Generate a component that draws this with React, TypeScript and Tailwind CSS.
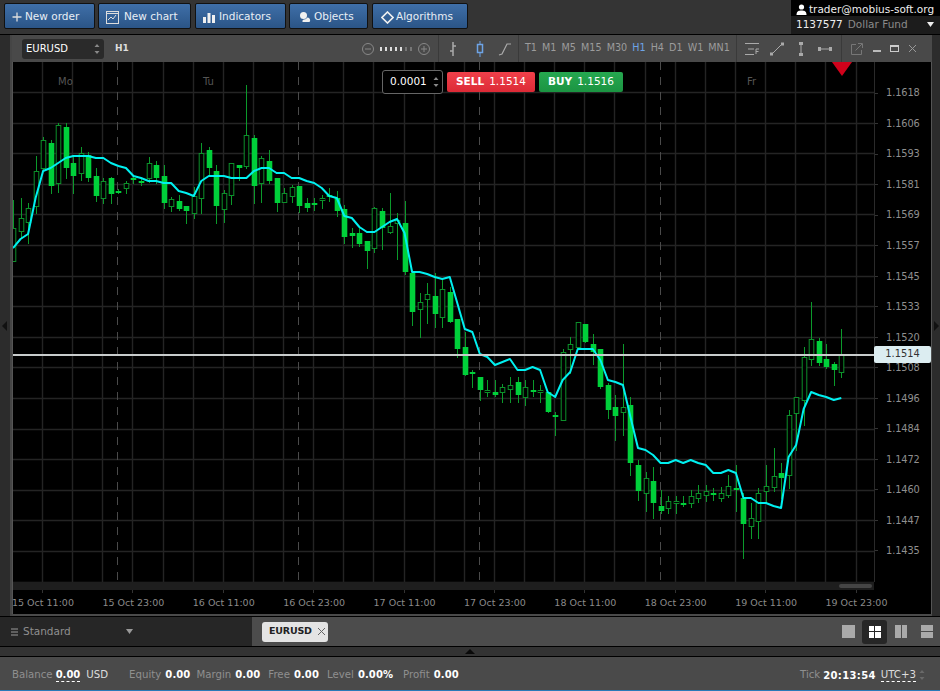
import React from "react";

// [high, low, bodyTop, bodyBottom, filled]
const C: [number, number, number, number, number][] = [
  [200,261,228,261,0],[198,237,218,231,0],[203,243,208,222,0],[156,213,171,206,0],[137,170,140,168,0],[140,193,143,186,1],[123,192,125,183,0],[123,178,127,168,1],[155,193,163,176,1],[147,180,153,173,0],
  [152,181,155,178,1],[168,201,176,196,1],[178,203,181,198,0],[177,203,178,194,1],[189,193,191,192,1],[181,193,183,188,0],[176,183,178,180,1],[178,185,181,182,1],[157,182,163,178,0],[161,183,165,178,1],
  [165,208,176,203,1],[197,211,199,206,0],[195,210,201,209,1],[206,223,206,211,1],[187,218,196,213,0],[143,213,153,198,0],[147,175,150,168,1],[165,223,171,206,1],[190,222,193,209,0],[163,204,163,195,0],
  [165,180,165,168,1],[85,168,135,166,0],[135,203,138,186,1],[156,202,158,183,0],[150,183,161,181,1],[178,211,178,203,1],[188,202,193,202,0],[185,202,187,196,0],[186,212,186,206,1],[198,211,203,208,1],
  [198,210,203,205,1],[195,208,198,200,0],[188,201,195,197,1],[191,216,198,211,1],[205,243,209,237,1],[228,247,233,236,1],[227,246,233,244,1],[241,268,241,251,1],[207,252,208,248,0],[208,249,211,228,1],
  [193,233,226,232,0],[213,259,220,223,0],[201,274,223,272,1],[270,325,273,312,1],[293,337,302,309,0],[283,323,294,299,0],[273,327,296,314,1],[280,327,289,317,0],[287,322,292,322,1],[319,357,319,349,1],
  [332,375,347,375,1],[370,387,372,374,1],[377,400,377,390,1],[380,396,390,392,0],[380,396,392,395,1],[384,402,387,392,0],[377,402,385,389,0],[377,402,382,395,1],[380,405,387,397,0],[380,396,390,391,1],
  [385,402,390,392,0],[392,412,392,412,1],[412,435,415,417,1],[349,420,352,420,0],[337,373,344,349,0],[322,348,322,347,0],[324,342,324,342,1],[334,364,344,352,1],[349,388,349,387,1],[383,418,385,410,1],
  [395,440,407,416,1],[344,435,407,412,0],[397,475,405,463,1],[460,500,465,491,1],[472,511,478,493,0],[467,518,481,503,1],[490,513,506,511,1],[496,513,501,508,0],[496,513,501,503,0],[496,506,503,505,1],
  [490,507,496,503,0],[485,502,493,498,0],[485,501,491,495,0],[488,500,493,495,1],[487,501,493,498,0],[475,497,486,495,0],[465,511,488,490,1],[493,558,498,524,1],[503,538,518,526,0],[488,538,493,521,0],
  [465,502,486,491,0],[448,491,476,487,0],[463,498,473,478,1],[410,488,415,475,0],[397,450,397,413,0],[347,425,357,400,0],[302,365,339,359,0],[338,365,341,363,1],[344,368,359,367,1],[362,385,364,370,1],
  [329,377,355,372,0],
];

const MA = [248,239,234,198,171,168,163,158,156,156,156,158,158,163,166,168,176,178,181,181,183,183,191,193,196,181,176,176,176,178,178,178,171,168,168,173,173,178,178,181,183,188,196,198,216,218,227,232,232,227,222,219,233,272,272,274,277,279,277,303,329,332,354,357,365,362,359,370,370,367,370,392,397,380,372,349,349,349,360,380,382,385,417,448,450,455,463,463,460,463,460,463,465,473,473,470,473,498,498,503,503,506,508,457,445,409,392,395,397,400,398];

const px = (i: number) => Math.round(13 + 7.53 * i) + 0.5;

function Chart() {
  const v = Array.from({ length: 28 }, (_, k) => Math.round(42 + 30.13 * k) + 0.5);
  const h = Array.from({ length: 17 }, (_, k) => Math.round(92 + 30.6 * k) + 0.5);
  return (
    <svg width={861} height={520} viewBox="13 62 861 520" className="block shrink-0 bg-black">
      {v.map((x) => <line key={x} x1={x} x2={x} y1={62} y2={582} stroke="#242424" strokeWidth={1.4} />)}
      {h.map((y) => <line key={y} x1={13} x2={874} y1={y} y2={y} stroke="#242424" strokeWidth={1.4} />)}
      {[117.5, 298.5, 479.5, 660.5].map((x) => <line key={x} x1={x} x2={x} y1={62} y2={582} stroke="#4a4a4a" strokeDasharray="8 7" />)}
      {C.map(([hi, lo, t, b, f], i) => {
        const x = px(i);
        return (
          <g key={i}>
            <line x1={x} x2={x} y1={hi} y2={lo + 1} stroke="#0b9a2b" />
            {f ? (
              <rect x={x - 2.8} y={t} width={5.6} height={Math.max(b - t, 2)} fill="#00d03a" />
            ) : (
              <rect x={x - 2.3} y={t + 0.5} width={4.6} height={Math.max(b - t, 2)} fill="#000" stroke="#0c8f2a" />
            )}
          </g>
        );
      })}
      <polyline points={MA.map((y, i) => `${13 + 7.53 * i},${y}`).join(" ")} fill="none" stroke="#00f0f0" strokeWidth={2} strokeLinejoin="round" />
      <rect x={13} y={354} width={861} height={2} fill="#c8cccc" />
      <polygon points="832,62 852,62 842,76" fill="#d0021b" />
      <text x={58} y={85} fill="#555" fontSize={10}>Mo</text>
      <text x={203} y={85} fill="#555" fontSize={10}>Tu</text>
      <text x={747} y={85} fill="#555" fontSize={10}>Fr</text>
    </svg>
  );
}

const Spinner = () => (
  <svg width="6" height="12" viewBox="0 0 6 12" className="shrink-0">
    <path d="M3 1 L5.5 4 H0.5 Z M3 11 L5.5 8 H0.5 Z" fill="#888" />
  </svg>
);

function TopButton({ label, icon, cls }: { label: string; icon: React.ReactNode; cls: string }) {
  return (
    <button className={`${cls} h-[26px] shrink-0 flex items-center pt-[2px] rounded-[2px] border border-[#111] bg-gradient-to-b from-[#3f6fa8] to-[#2b5587] text-[#e8eef5] text-[10.5px] whitespace-nowrap`}>
      {icon}
      <span>{label}</span>
    </button>
  );
}

const sv = { fill: "none", stroke: "#ddd" };

const Tf = ({ t, on }: { t: string; on?: boolean }) => (
  <span className={on ? "text-[#6ea4e6]" : "text-[#9c9c9c]"}>{t}</span>
);

function Header() {
  return (
    <div className="h-[27px] flex items-center bg-[#494949] shrink-0 text-[9.5px]">
      <div className="ml-[10px] w-[82px] h-[20px] bg-[#2a2a2a] rounded-[3px] flex items-center justify-between pl-[4px] pr-[4px] text-white text-[10px]">
        <span>EURUSD</span>
        <Spinner />
      </div>
      <span className="ml-[11px] w-[246px] text-[#ddd] font-bold text-[9px]">H1</span>
      <svg width="14" height="14" viewBox="0 0 14 14" className="shrink-0"><circle cx="7" cy="7" r="5.5" fill="none" stroke="#888" /><path d="M4 7H10" stroke="#888" /></svg>
      <svg width="36" height="6" viewBox="0 0 36 6" className="shrink-0 ml-[2px]">
        {[3, 8, 13, 18, 23, 28, 33].map((x, i) => <rect key={x} x={x} y={1} width={2} height={4} fill={i < 5 ? "#ddd" : "#777"} />)}
      </svg>
      <svg width="14" height="14" viewBox="0 0 14 14" className="shrink-0 ml-[4px]"><circle cx="7" cy="7" r="5.5" fill="none" stroke="#888" /><path d="M4 7H10M7 4V10" stroke="#888" /></svg>
      <div className="ml-[7px] h-full w-px bg-[#3a3a3a]" />
      <svg width="10" height="16" viewBox="0 0 10 16" className="ml-[9px] shrink-0"><path d="M5 1V15M2 10H5M5 5H8" stroke="#aaa" strokeWidth="1.5" fill="none" /></svg>
      <svg width="10" height="16" viewBox="0 0 10 16" className="ml-[17px] shrink-0"><path d="M5 0V16" stroke="#6ea4e6" /><rect x="2.5" y="3.5" width="5" height="8" fill="#494949" stroke="#6ea4e6" strokeWidth="1.5" /></svg>
      <svg width="14" height="14" viewBox="0 0 14 14" className="ml-[13px] shrink-0"><path d="M1 13L4 12L9 2H13" stroke="#aaa" strokeWidth="1.2" fill="none" /></svg>
      <div className="ml-[6px] h-full w-px bg-[#3a3a3a]" />
      <div className="ml-[6px] w-[205px] shrink-0 flex justify-between text-[9.6px]">
        <Tf t="T1" /><Tf t="M1" /><Tf t="M5" /><Tf t="M15" /><Tf t="M30" /><Tf t="H1" on /><Tf t="H4" /><Tf t="D1" /><Tf t="W1" /><Tf t="MN1" />
      </div>
      <div className="ml-[6px] h-full w-px bg-[#3a3a3a]" />
      <svg width="14" height="12" viewBox="0 0 14 12" className="ml-[8px] shrink-0"><path d="M0 .5H14M3 6H9M0 11.5H9M11 11V6H14M11 8.5H13.5" stroke="#aaa" fill="none" /></svg>
      <svg width="14" height="14" viewBox="0 0 14 14" className="ml-[11px] shrink-0"><path d="M2 12L12 2" stroke="#aaa" /><rect x="0" y="10.5" width="3" height="3" fill="#aaa" /><rect x="11" y=".5" width="3" height="3" fill="#aaa" /></svg>
      <svg width="6" height="14" viewBox="0 0 6 14" className="ml-[14px] shrink-0"><path d="M3 2V12" stroke="#aaa" /><rect x="1" y="0" width="4" height="3" fill="#aaa" /><rect x="1" y="11" width="4" height="3" fill="#aaa" /></svg>
      <svg width="14" height="6" viewBox="0 0 14 6" className="ml-[14px] shrink-0"><path d="M2 3H12" stroke="#aaa" /><rect x="0" y="1" width="3" height="4" fill="#aaa" /><rect x="11" y="1" width="3" height="4" fill="#aaa" /></svg>
      <div className="ml-[9px] h-full w-px bg-[#3a3a3a]" />
      <svg width="12" height="12" viewBox="0 0 12 12" className="ml-[9px] shrink-0"><path d="M5 1.5H.5V11.5H10.5V7M4.5 7.5L11 1M7 .5H11.5V5" stroke="#777" fill="none" /></svg>
      <svg width="9" height="9" viewBox="0 0 9 9" className="ml-[10px] shrink-0"><rect x="0" y="6" width="8" height="2" fill="#bbb" /></svg>
      <svg width="9" height="9" viewBox="0 0 9 9" className="ml-[8px] shrink-0"><rect x=".5" y="1.5" width="8" height="6" fill="none" stroke="#ccc" /><rect x="0" y="1" width="9" height="2" fill="#ccc" /></svg>
      <svg width="9" height="9" viewBox="0 0 9 9" className="ml-[9px] shrink-0"><path d="M1 1L8 8M8 1L1 8" stroke="#999" /></svg>
    </div>
  );
}

const prices = ["1.1618","1.1606","1.1593","1.1581","1.1569","1.1557","1.1545","1.1533","1.1520","1.1508","1.1496","1.1484","1.1472","1.1460","1.1447","1.1435"];
const times = ["15 Oct 11:00","15 Oct 23:00","16 Oct 11:00","16 Oct 23:00","17 Oct 11:00","17 Oct 23:00","18 Oct 11:00","18 Oct 23:00","19 Oct 11:00","19 Oct 23:00"];

const St = ({ l, v, cls }: { l: string; v: string; cls: string }) => (
  <span className={`${cls} flex items-baseline gap-[4px]`}>
    <span className="text-[#8f8f8f]">{l}</span>
    <span className="text-white font-bold text-[10px] tracking-[0.1px]">{v}</span>
  </span>
);

export default function App() {
  return (
    <div className="w-[940px] h-[691px] overflow-hidden flex flex-col bg-[#333] font-['DejaVu_Sans',sans-serif]">
      {/* top bar */}
      <div className="h-[35px] shrink-0 flex bg-[#343434] border-b border-black">
        <div className="flex pl-[4px] pt-[3px]">
          <TopButton cls="w-[91px] pl-[7px] gap-[3px]" label="New order" icon={<svg width="10" height="10" viewBox="0 0 10 10"><path d="M5 0.5V9.5M0.5 5H9.5" stroke="#ddd" strokeWidth="1.3" /></svg>} />
          <TopButton cls="ml-[3px] w-[93px] pl-[7px] gap-[5px]" label="New chart" icon={<svg width="13" height="13" viewBox="0 0 13 13"><rect x=".5" y=".5" width="12" height="12" {...sv} /><path d="M2 9L5 6L7 8L10 4" {...sv} /><path d="M1 2.5H12" {...sv} /></svg>} />
          <TopButton cls="ml-[4px] w-[91px] pl-[7px] gap-[4px]" label="Indicators" icon={<svg width="12" height="11" viewBox="0 0 12 11"><path d="M0 5H3V11H0ZM4.5 1H7.5V11H4.5ZM9 3H12V11H9Z" fill="#f0f0f0" /></svg>} />
          <TopButton cls="ml-[3px] w-[79px] pl-[9px] gap-[3px]" label="Objects" icon={<svg width="12" height="12" viewBox="0 0 12 12"><circle cx="4.5" cy="4.5" r="3.5" fill="#f0f0f0" /><path d="M5 8.5C8 8.5 8 5 10 7C12 9 11 11 10 11H4C3 11 3 9 5 8.5Z" fill="#f0f0f0" /></svg>} />
          <TopButton cls="ml-[4px] w-[96px] pl-[8px] gap-[2px]" label="Algorithms" icon={<svg width="13" height="13" viewBox="0 0 13 13"><path d="M6.5 1L12 6.5L6.5 12L1 6.5Z" fill="none" stroke="#f0f0f0" strokeWidth="1.6" /></svg>} />
        </div>
        <div className="ml-auto w-[149px] h-full bg-[#1c1c1c] flex flex-col">
          <div className="h-[16px] pt-[3px] bg-black flex items-center gap-[2px] pl-[5px] text-[#eee] text-[10.5px] whitespace-nowrap">
            <svg width="11" height="11" viewBox="0 0 11 11" className="shrink-0"><circle cx="5.5" cy="3" r="2.6" fill="#fff" /><path d="M0.5 11C0.5 7 3 6.5 5.5 6.5S10.5 7 10.5 11Z" fill="#fff" /></svg>
            <span>trader@mobius-soft.org</span>
          </div>
          <div className="flex-1 flex items-center pl-[5px] pr-[6px] text-[10.5px] gap-[5px] whitespace-nowrap">
            <span className="text-[#eee]">1137577</span>
            <span className="text-[#8a8a8a]">Dollar Fund</span>
            <svg width="7" height="6" viewBox="0 0 7 6" className="ml-auto"><path d="M0 0H7L3.5 5Z" fill="#eee" /></svg>
          </div>
        </div>
      </div>

      {/* chart region */}
      <div className="h-[581px] shrink-0 flex">
        <div className="w-[12px] shrink-0 flex items-center bg-[#2c2c2c] border-r-2 border-[#454545]">
          <svg width="5" height="10" viewBox="0 0 5 10" className="ml-[2px]"><path d="M5 0V10L0 5Z" fill="#111" /></svg>
        </div>
        <div className="relative w-[920px] shrink-0 flex flex-col bg-[#4a4a4a]">
          <Header />
          <div className="flex flex-col bg-black border-l border-[#555] border-r border-r-[#555]">
            <div className="flex h-[520px]">
              <Chart />
              <div className="flex-1 flex flex-col pt-[16px] border-l border-[#2a2a2a] text-[#8f8f8f] text-[9.8px] tracking-[-0.1px]">
                {prices.map((p) => (
                  <div key={p} className="h-[30.53px] shrink-0 flex items-center">
                    <span className="w-[3px] h-px bg-[#333]" />
                    <span className="ml-[8px] pt-[1px]">{p}</span>
                  </div>
                ))}
              </div>
            </div>
            <div className="h-[8px] flex">
              <div className="w-[861px] h-full flex items-center justify-end pr-[2px] bg-[#1e1e1e]">
                <div className="w-[33px] h-[4px] rounded-full bg-[#454545]" />
              </div>
            </div>
            <div className="h-[24px] flex ml-[-1px] overflow-hidden text-[#8a8a8a] text-[9.5px] whitespace-nowrap">
              {times.map((t) => (
                <div key={t} className="w-[90.4px] shrink-0 flex flex-col">
                  <span className="w-px h-[3px] ml-[30px] bg-[#333]" />
                  <span className="mt-[3px]">{t}</span>
                </div>
              ))}
            </div>
          </div>

          {/* overlays */}
          <div className="absolute left-[370px] top-[35px] flex items-center gap-[4px] whitespace-nowrap">
            <div className="w-[61px] h-[24px] flex items-center justify-between pl-[7px] pr-[3px] bg-black border border-[#666] rounded-[3px] text-white text-[10.5px]">
              <span>0.0001</span>
              <Spinner />
            </div>
            <div className="w-[88px] h-[20px] flex items-center justify-center gap-[5px] rounded-[2px] bg-gradient-to-b from-[#f0404a] to-[#dc2a36] text-white text-[10.5px]">
              <b>SELL</b><span>1.1514</span>
            </div>
            <div className="w-[84px] h-[20px] flex items-center justify-center gap-[5px] rounded-[2px] bg-gradient-to-b from-[#26a850] to-[#1b9442] text-white text-[10.5px]">
              <b>BUY</b><span>1.1516</span>
            </div>
          </div>
          <div className="absolute left-[862px] top-[311px] w-[57px] h-[17px] flex items-center justify-center rounded-[2px] bg-[#dcedf1] text-[#333] text-[9.8px]">
            1.1514
          </div>
        </div>
        <div className="flex-1 flex items-center justify-end bg-[#2c2c2c]">
          <svg width="5" height="10" viewBox="0 0 5 10" className="mr-[1px]"><path d="M0 0V10L5 5Z" fill="#111" /></svg>
        </div>
      </div>

      {/* workspace / tabs */}
      <div className="h-[31px] shrink-0 flex border-t border-black border-b border-b-black">
        <div className="w-[252px] shrink-0 bg-[#262626] flex items-center pl-[11px] text-[#8f8f8f] text-[10.5px]">
          <svg width="7" height="8" viewBox="0 0 7 8" className="shrink-0"><path d="M0 1H7M0 4H7M0 7H7" stroke="#999" /></svg>
          <span className="ml-[5px]">Standard</span>
          <svg width="7" height="5" viewBox="0 0 7 5" className="ml-[55px]"><path d="M0 0H7L3.5 5Z" fill="#999" /></svg>
        </div>
        <div className="flex-1 bg-[#4c4c4c] flex items-center pl-[10px]">
          <div className="w-[66px] h-[20px] rounded-[3px] bg-[#e4e4e4] flex items-center pl-[7px] gap-[5px] text-[#222] text-[9.5px] font-bold tracking-[-0.2px]">
            <span>EURUSD</span>
            <svg width="9" height="9" viewBox="0 0 9 9"><path d="M1 1L8 8M8 1L1 8" stroke="#666" /></svg>
          </div>
          <div className="ml-auto flex items-center mr-[7px]">
            <div className="w-[13px] h-[13px] bg-[#aaa]" />
            <div className="ml-[7px] w-[25px] h-[24px] rounded-[3px] bg-[#262626] flex items-center justify-center">
              <div className="w-[12px] h-[12px] grid grid-cols-2 gap-px"><i className="bg-white" /><i className="bg-white" /><i className="bg-white" /><i className="bg-white" /></div>
            </div>
            <div className="ml-[8px] w-[12px] h-[13px] grid grid-cols-2 gap-px"><i className="bg-[#aaa]" /><i className="bg-[#aaa]" /></div>
            <div className="ml-[14px] w-[12px] h-[13px] grid grid-rows-2 gap-px"><i className="bg-[#aaa]" /><i className="bg-[#aaa]" /></div>
          </div>
        </div>
      </div>

      {/* collapse strip */}
      <div className="h-[10px] shrink-0 flex items-center justify-center bg-[#333] border-b border-black">
        <svg width="10" height="5" viewBox="0 0 10 5"><path d="M0 5H10L5 0Z" fill="#0a0a0a" /></svg>
      </div>

      {/* status */}
      <div className="flex-1 flex items-center pt-[3px] pl-[12px] pr-[15px] bg-[#4a4a4a] border-b border-[#2a7ab8] text-[10.2px] whitespace-nowrap">
        <span className="text-[#8f8f8f]">Balance</span>
        <span className="ml-[3px] text-white font-bold text-[10px] border-b border-dashed border-white leading-[12px]">0.00</span>
        <span className="ml-[6px] text-[#ddd]">USD</span>
        <St cls="ml-[21px]" l="Equity" v="0.00" />
        <St cls="ml-[6px]" l="Margin" v="0.00" />
        <St cls="ml-[8px]" l="Free" v="0.00" />
        <St cls="ml-[8px]" l="Level" v="0.00%" />
        <St cls="ml-[10px]" l="Profit" v="0.00" />
        <span className="ml-auto text-[#8f8f8f]">Tick</span>
        <span className="ml-[3px] text-white font-bold text-[10px] tracking-[0.35px]">20:13:54</span>
        <span className="ml-[5px] text-[#ddd] border-b border-dashed border-white leading-[12px]">UTC+3</span>
        <span className="ml-[3px] opacity-50"><Spinner /></span>
      </div>
    </div>
  );
}
